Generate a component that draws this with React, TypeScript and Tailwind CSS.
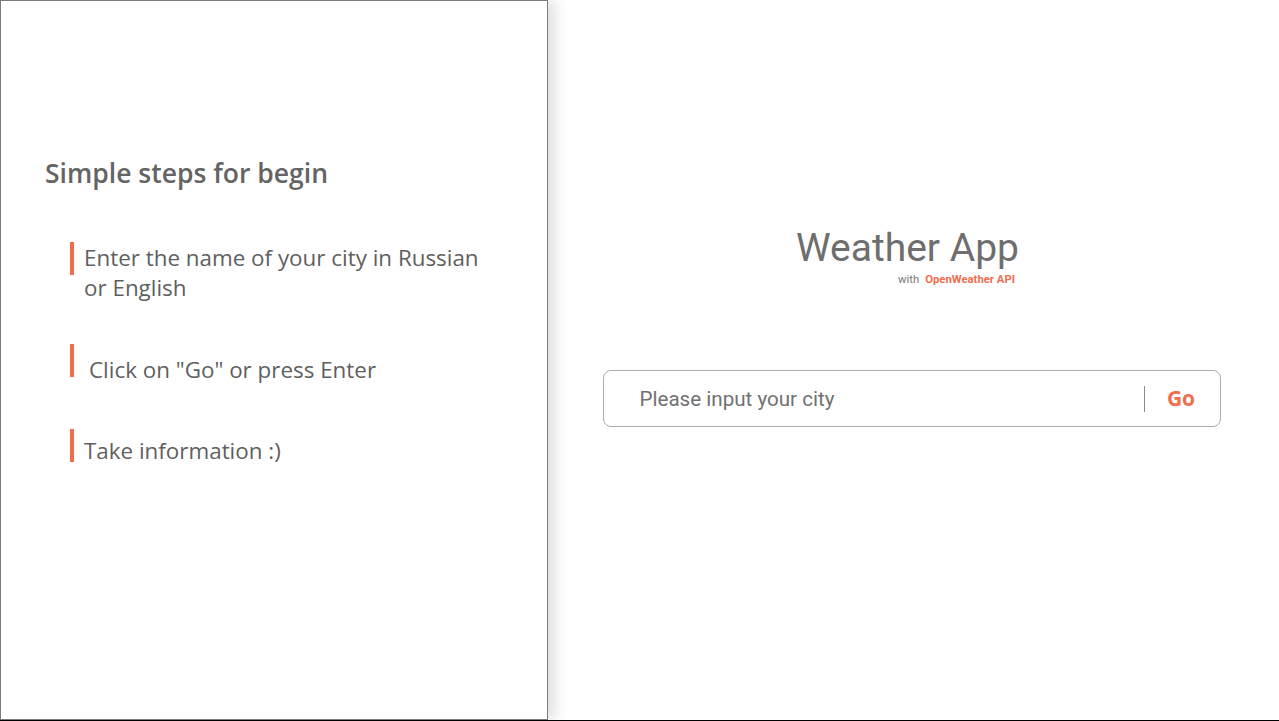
import { useState } from "react";

const STEPS = [
  { text: "Enter the name of your city in Russian or English", mt: "mt-[51px]", pl: "pl-[10px]", pt: "pt-[1px]" },
  { text: 'Click on "Go" or press Enter', mt: "mt-[41px]", pl: "pl-[15px]", pt: "pt-[11px]" },
  { text: "Take information :)", mt: "mt-[44px]", pl: "pl-[10px]", pt: "pt-[7px]" },
];

function Steps() {
  return (
    <aside className="relative z-10 flex h-full w-[548px] shrink-0 flex-col border border-[#7a7a7a] bg-white pl-[44px] pt-[154px] shadow-[6px_0_14px_rgba(0,0,0,0.14)] [font-family:'Open_Sans','Noto_Sans',sans-serif]">
      <h2 className="text-[26.5px] font-semibold leading-[36px] text-[#646464]">Simple steps for begin</h2>
      <ul className="pl-[25px]">
        {STEPS.map((s, i) => (
          <li key={i} className={`flex items-start ${s.mt}`}>
            <span className="h-[33px] w-[4px] shrink-0 bg-[#ee6e4e]" />
            <span className={`${s.pl} ${s.pt} max-w-[420px] text-[22.4px] leading-[30px] text-[#5f5f5f]`}>{s.text}</span>
          </li>
        ))}
      </ul>
    </aside>
  );
}

export default function App() {
  const [city, setCity] = useState("");

  return (
    <div className="h-[721px] w-full border-b border-black bg-white">
      <div className="flex h-[720px]">
        <Steps />
        <main className="flex flex-1 flex-col items-center pt-[225px] [font-family:Roboto,'Liberation_Sans',sans-serif]">
          <div className="mr-[12px] flex flex-col items-end">
            <h1 className="text-[39px] font-normal leading-[46px] text-[#6e6e6e]">Weather App</h1>
            <p className="mt-[2px] mr-[4px] text-[11.3px] leading-[14px]">
              <span className="text-[#777]">with</span>
              <span className="ml-[6px] font-bold text-[#ee6e4e]">OpenWeather API</span>
            </p>
          </div>
          <form
            className="mt-[83px] ml-[-4px] flex h-[57px] w-[618px] items-center rounded-[8px] border border-[#ababab] bg-white"
            onSubmit={(e) => e.preventDefault()}
          >
            <input
              value={city}
              onChange={(e) => setCity(e.target.value)}
              placeholder="Please input your city"
              className="h-full flex-1 bg-transparent pl-[36px] text-[20.6px] text-[#555] outline-none placeholder:text-[#717171]"
            />
            <span className="h-[26px] w-px bg-[#8a8a8a]" />
            <button type="submit" className="w-[75px] pr-[2px] text-center text-[21px] font-bold text-[#ee6e4e] [font-family:'Open_Sans',sans-serif]">
              Go
            </button>
          </form>
        </main>
      </div>
    </div>
  );
}
